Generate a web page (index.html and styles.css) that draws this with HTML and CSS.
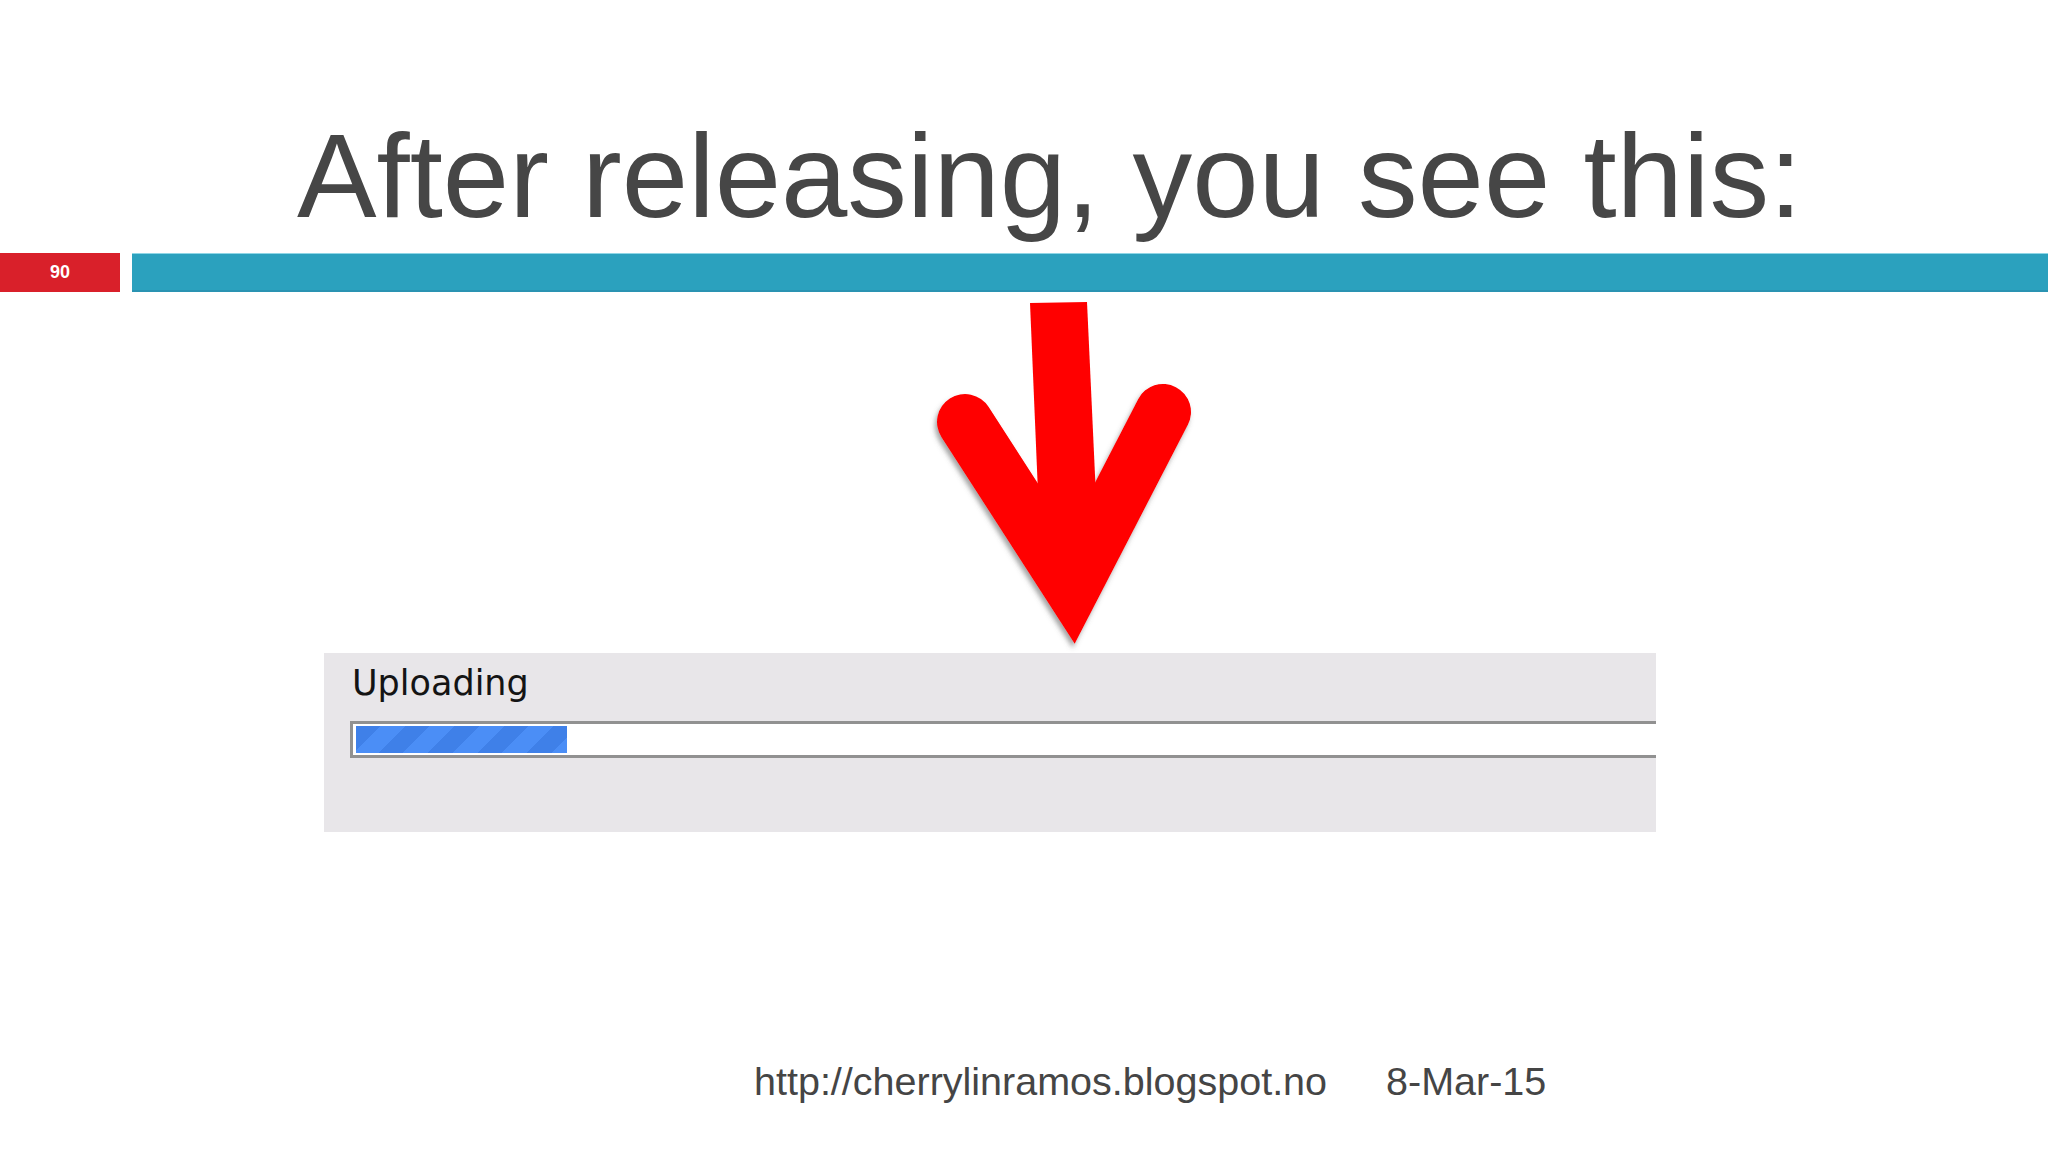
FILE: index.html
```html
<!DOCTYPE html>
<html>
<head>
<meta charset="utf-8">
<title>After releasing</title>
<link rel="stylesheet" href="styles.css">
</head>
<body>
<div class="slide">
  <h1 class="title">After releasing, you see this:</h1>
  <div class="bar-row">
    <div class="num">90</div>
    <div class="teal"></div>
  </div>
  <div class="arrow-wrap">
    <svg class="arrow" width="340" height="361" viewBox="880 292 340 361" xmlns="http://www.w3.org/2000/svg">
      <defs>
        <filter id="sh" filterUnits="userSpaceOnUse" x="880" y="292" width="340" height="361">
          <feDropShadow dx="-2" dy="4" stdDeviation="2.5" flood-color="#555" flood-opacity="0.55"/>
        </filter>
      </defs>
      <path d="M965,422 L1072,588 L1163,412" fill="none" stroke="#ff0000" stroke-width="56" stroke-linecap="round" stroke-linejoin="miter" stroke-miterlimit="10" filter="url(#sh)"/>
      <polygon points="1030,303 1087,302 1098,540 1040,540" fill="#ff0000"/>
    </svg>
  </div>
  <div class="dialog">
    <div class="dlg-label">Uploading</div>
    <div class="track">
      <div class="fill"></div>
    </div>
  </div>
  <div class="footer">
    <span class="url">http://cherrylinramos.blogspot.no</span>
    <span class="date">8-Mar-15</span>
  </div>
</div>
</body>
</html>
```

FILE: styles.css
```css
html, body {
  margin: 0;
  padding: 0;
  background: #ffffff;
}
.slide {
  width: 2048px;
  height: 1152px;
  overflow: hidden;
  background: #ffffff;
  display: flex;
  flex-direction: column;
}
.title {
  margin: 0;
  padding: 109px 0 0 297px;
  height: 134px;
  font-family: "Liberation Sans", Arial, sans-serif;
  font-weight: normal;
  font-size: 119.3px;
  line-height: 134px;
  color: #464646;
  white-space: nowrap;
}
.bar-row {
  margin-top: 10px;
  height: 39px;
  display: flex;
  gap: 12px;
}
.num {
  width: 120px;
  background: #d9202a;
  color: #ffffff;
  font-family: "Liberation Sans", Arial, sans-serif;
  font-weight: bold;
  font-size: 18px;
  display: flex;
  align-items: center;
  justify-content: center;
}
.teal {
  flex: 1;
  background: #2ba1be;
  border-top: 1px solid #8fd6e6;
  border-bottom: 2px solid #2a93b2;
}
.arrow-wrap {
  height: 361px;
  padding-left: 880px;
}
.arrow {
  display: block;
}
.dialog {
  margin-left: 324px;
  width: 1332px;
  height: 179px;
  background: #e8e6e9;
  box-sizing: border-box;
  padding-top: 10px;
}
.dlg-label {
  margin-left: 28px;
  font-family: "DejaVu Sans", Verdana, sans-serif;
  font-size: 35px;
  line-height: 40px;
  color: #141414;
}
.track {
  margin-top: 18px;
  margin-left: 26px;
  height: 27px;
  padding: 2px 0 2px 3px;
  background: #ffffff;
  border: 3px solid #919191;
  border-right: none;
}
.fill {
  width: 211px;
  height: 27px;
  background: repeating-linear-gradient(135deg, #3f80e8 0 17px, #4b8ef6 17px 35px);
}
.footer {
  margin-top: 226px;
  padding-left: 754px;
  display: flex;
  gap: 59px;
  font-family: "Liberation Sans", Arial, sans-serif;
  font-size: 39.5px;
  line-height: 46px;
  color: #454545;
  white-space: nowrap;
}
```
